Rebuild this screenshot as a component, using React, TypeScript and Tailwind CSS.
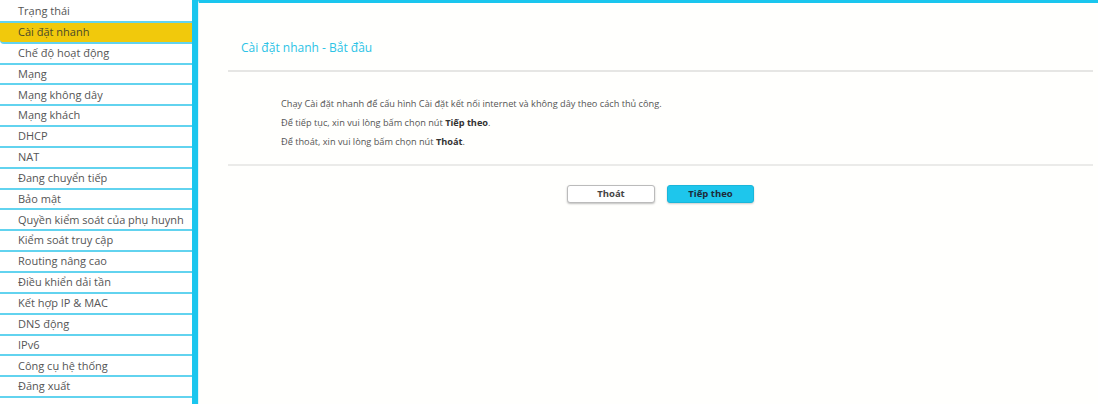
import React from 'react';

const menu = [
  'Trạng thái',
  'Cài đặt nhanh',
  'Chế độ hoạt động',
  'Mạng',
  'Mạng không dây',
  'Mạng khách',
  'DHCP',
  'NAT',
  'Đang chuyển tiếp',
  'Bảo mật',
  'Quyền kiểm soát của phụ huynh',
  'Kiểm soát truy cập',
  'Routing nâng cao',
  'Điều khiển dải tần',
  'Kết hợp IP & MAC',
  'DNS động',
  'IPv6',
  'Công cụ hệ thống',
  'Đăng xuất',
];

const Sidebar: React.FC = () => (
  <div className="w-[198px] shrink-0 h-[404px] bg-white border-r-[6px] border-[#1ac6ee] flex flex-col pt-[2px]">
    <div className="h-[396px] flex flex-col">
      {menu.map((item, i) => (
        <div
          key={item}
          className={`flex-1 flex items-center pl-[18px] text-[11px] border-b-2 border-[#62d3ef] ${
            i === 1 ? 'bg-[#f1c90c] text-[#4a4a2a] rounded-bl-[4px]' : 'text-[#555]'
          }`}
        >
          {item}
        </div>
      ))}
    </div>
  </div>
);

export default function App() {
  return (
    <div className="w-[1098px] h-[404px] flex bg-[#fffffd] overflow-hidden" style={{ fontFamily: '"Open Sans", "Liberation Sans", sans-serif' }}>
      <Sidebar />
      <div className="flex-1 border-t-[3px] border-[#1ac6ee] border-l border-l-[#e2f4f8] pl-[29px] pr-[5px]">
        <div className="pl-[13px] pt-[36px] pb-[13px] text-[12px] text-[#2cc3e6]">Cài đặt nhanh - Bắt đầu</div>
        <div className="h-[2px] bg-[#e6e6e4]" />
        <div className="pl-[53px] pt-[22px] pb-[13px] text-[9.2px] text-[#555] leading-[19px]">
          <div>Chạy Cài đặt nhanh để cấu hình Cài đặt kết nối internet và không dây theo cách thủ công.</div>
          <div>
            Để tiếp tục, xin vui lòng bấm chọn nút <span className="font-bold text-[#333]">Tiếp theo</span>.
          </div>
          <div>
            Để thoát, xin vui lòng bấm chọn nút <span className="font-bold text-[#333]">Thoát</span>.
          </div>
        </div>
        <div className="h-[2px] bg-[#ebebe9]" />
        <div className="flex justify-center gap-[12px] pt-[19px]">
          <button className="w-[88px] h-[18px] rounded-[3px] bg-white border border-[#bbb] shadow-[0_1px_2px_rgba(0,0,0,0.25)] text-[9.5px] font-bold text-[#444]">
            Thoát
          </button>
          <button className="w-[87px] h-[18px] rounded-[3px] bg-[#1ec6ec] border border-[#1ab6da] shadow-[0_1px_2px_rgba(0,0,0,0.2)] text-[9.5px] font-bold text-[#1d2b3a]">
            Tiếp theo
          </button>
        </div>
      </div>
    </div>
  );
}
